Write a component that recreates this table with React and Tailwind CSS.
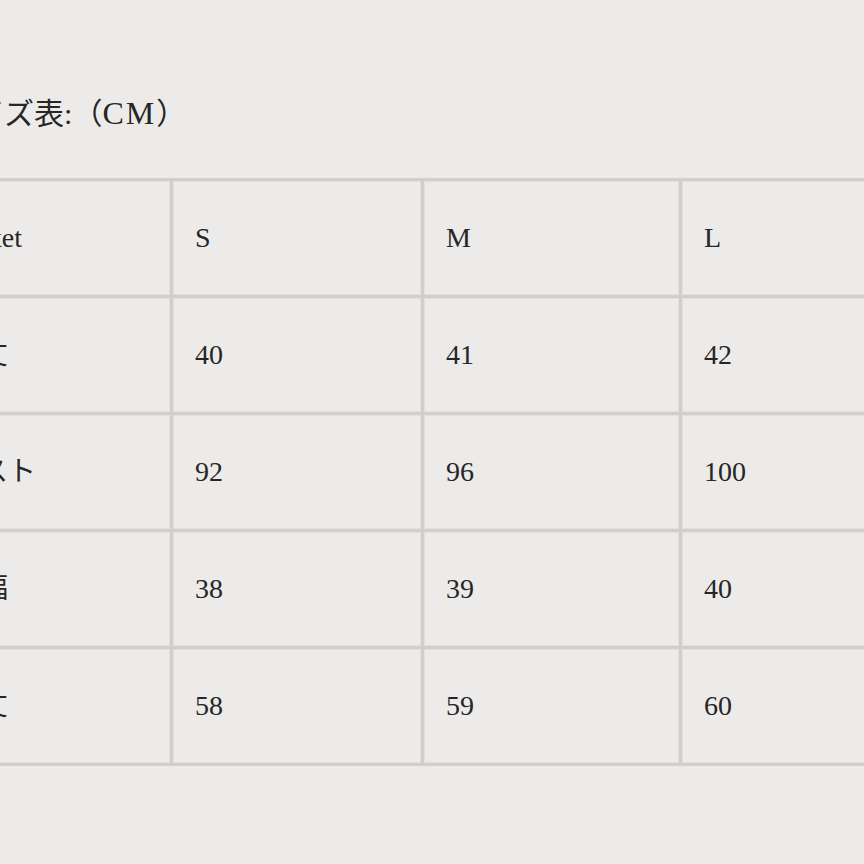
import React from "react";

const FONT = { fontFamily: '"Liberation Serif", "Noto Sans CJK JP", serif' };

const ROWS = [
  ["Jacket", "S", "M", "L"],
  ["着丈", "40", "41", "42"],
  ["バスト", "92", "96", "100"],
  ["肩幅", "38", "39", "40"],
  ["袖丈", "58", "59", "60"],
];

export default function App() {
  return (
    <div
      className="w-[864px] h-[864px] overflow-hidden bg-[#ecebe9] text-[#262626]"
      style={FONT}
    >
      <div className="pt-[93px] -ml-[73px]">
        {/* Title */}
        <div className="pl-[18px] h-[40px] leading-[40px] text-[30px] whitespace-nowrap">
          サイズ表:（<span className="text-[32px] tracking-[2px]">CM</span>）
        </div>

        {/* Size table */}
        <div className="mt-[45px] w-max grid grid-cols-[240px_248px_255px_255px] auto-rows-[114px] gap-[3px] p-[3px] bg-[#d0cfcd]">
          {ROWS.map((row, i) =>
            row.map((cell, j) => (
              <div
                key={`${i}-${j}`}
                className="flex items-center pl-[21px] bg-[#ecebe9] border border-[#e2e1df] text-[28px] leading-none whitespace-nowrap"
              >
                {cell}
              </div>
            ))
          )}
        </div>
      </div>
    </div>
  );
}
